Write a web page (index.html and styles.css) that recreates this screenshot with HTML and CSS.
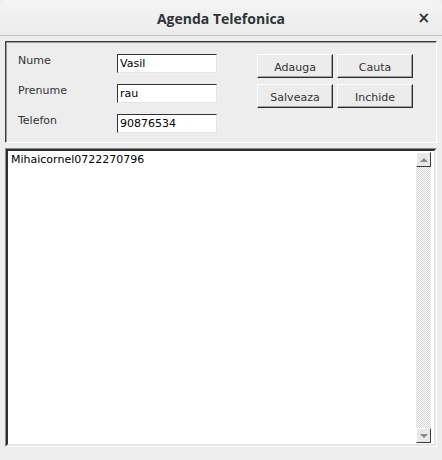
FILE: index.html
```html
<!DOCTYPE html>
<html>
<head>
<meta charset="utf-8">
<link rel="stylesheet" href="styles.css">
</head>
<body>
<div class="window">
  <div class="titlebar">
    <span class="spacer"></span>
    <span class="title">Agenda Telefonica</span>
    <span class="close">×</span>
  </div>
  <div class="main">
    <div class="panel">
      <div class="form">
        <label class="lbl">Nume</label>
        <input class="field" value="Vasil">
        <label class="lbl">Prenume</label>
        <input class="field" value="rau">
        <label class="lbl">Telefon</label>
        <input class="field" value="90876534">
      </div>
      <div class="buttons">
        <button class="btn">Adauga</button>
        <button class="btn">Cauta</button>
        <button class="btn">Salveaza</button>
        <button class="btn">Inchide</button>
      </div>
    </div>
    <div class="list">
      <div class="list-inner">
        <div class="list-text">Mihaicornel0722270796</div>
        <div class="scrollbar">
          <div class="sb-btn"><span class="tri-up"></span></div>
          <div class="sb-track"></div>
          <div class="sb-btn"><span class="tri-down"></span></div>
        </div>
      </div>
    </div>
  </div>
</div>
</body>
</html>
```
FILE: styles.css
```css
* { box-sizing: border-box; }
html, body { margin: 0; padding: 0; }
body {
  width: 442px;
  height: 460px;
  background: #ededed;
  font-family: "DejaVu Sans", sans-serif;
  font-size: 11px;
  overflow: hidden;
}
.window {
  width: 442px;
  height: 460px;
  display: flex;
  flex-direction: column;
  background: #ededed;
}
.titlebar {
  height: 36px;
  flex: none;
  display: grid;
  grid-template-columns: 1fr auto 1fr;
  align-items: center;
  background: linear-gradient(#f4f4f4, #ececec);
  border-bottom: 1px solid #c2c2c2;
  border-radius: 6px 6px 0 0;
}
.title {
  font-family: "Open Sans", "DejaVu Sans", sans-serif;
  font-weight: bold;
  font-size: 14px;
  color: #2e3436;
  padding-top: 1px;
}
.close {
  justify-self: end;
  padding-right: 12px;
  font-family: "DejaVu Sans", sans-serif;
  font-weight: bold;
  font-size: 15px;
  color: #2e3436;
  padding-top: 1px;
}
.main {
  flex: 1;
  display: flex;
  flex-direction: column;
  gap: 5px;
  padding: 5px 5px 13px 5px;
}
.panel {
  height: 102px;
  flex: none;
  display: flex;
  align-items: flex-start;
  border: 1px solid;
  border-color: #3c3c3c #ffffff #ffffff #3c3c3c;
  box-shadow: inset 1px 1px 0 #9a9a9a;
  padding: 12px 0 0 12px;
}
.form {
  display: grid;
  grid-template-columns: 99px 100px;
  grid-auto-rows: 19px;
  row-gap: 11px;
}
.lbl {
  align-self: start;
  line-height: 13px;
  color: #333;
}
.field {
  width: 100px;
  height: 19px;
  margin: 0;
  padding: 0 0 0 2px;
  border: 1px solid;
  border-color: #333 #e4e4e4 #e4e4e4 #333;
  background: #fff;
  font-family: "DejaVu Sans", sans-serif;
  font-size: 11px;
  color: #000;
  outline: none;
}
.buttons {
  margin-left: 40px;
  display: grid;
  grid-template-columns: 76px 76px;
  grid-auto-rows: 24px;
  column-gap: 4px;
  row-gap: 6px;
}
.btn {
  margin: 0;
  padding: 2px 0 0 0;
  border: 1px solid;
  border-color: #ffffff #2c2c2c #2c2c2c #ffffff;
  box-shadow: inset -1px -1px 0 #a0a0a0;
  background: #ececec;
  font-family: "DejaVu Sans", sans-serif;
  font-size: 11px;
  color: #333;
}
.list {
  flex: 1;
  display: flex;
  border: 1px solid;
  border-color: #8c8c8c #ffffff #ffffff #8c8c8c;
}
.list-inner {
  flex: 1;
  display: flex;
  border: 2px solid;
  border-color: #2e2e2e #e6e6e6 #e6e6e6 #2e2e2e;
  background: #fff;
}
.list-text {
  flex: 1;
  padding: 2px 3px;
  line-height: 13px;
  color: #000;
}
.scrollbar {
  width: 15px;
  margin: 1px 3px 1px 0;
  display: flex;
  flex-direction: column;
}
.sb-btn {
  height: 15px;
  flex: none;
  display: flex;
  align-items: center;
  justify-content: center;
  background: #e8e8e8;
  border: 1px solid;
  border-color: #ffffff #3a3a3a #3a3a3a #ffffff;
}
.sb-track {
  flex: 1;
  background: repeating-conic-gradient(#d4d4d4 0 25%, #ffffff 0 50%) 0 0 / 2px 2px;
}
.tri-up {
  width: 0; height: 0;
  border-left: 4px solid transparent;
  border-right: 4px solid transparent;
  border-bottom: 4px solid #888;
}
.tri-down {
  width: 0; height: 0;
  border-left: 4px solid transparent;
  border-right: 4px solid transparent;
  border-top: 4px solid #888;
}
```
